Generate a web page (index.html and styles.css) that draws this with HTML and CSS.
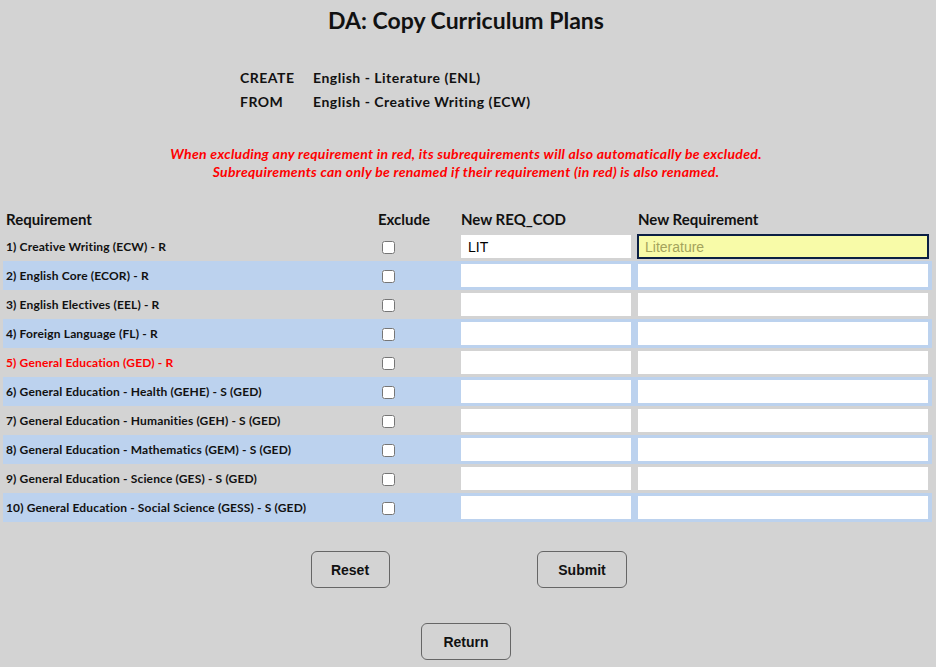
FILE: index.html
```html
<!DOCTYPE html>
<html lang="en">
<head>
<meta charset="utf-8">
<title>DA: Copy Curriculum Plans</title>
<link rel="stylesheet" href="styles.css">
</head>
<body>
<h1 class="title">DA: Copy Curriculum Plans</h1>
<div class="info">
  <span class="info-label">CREATE</span><span class="info-value">English - Literature (ENL)</span>
  <span class="info-label">FROM</span><span class="info-value">English - Creative Writing (ECW)</span>
</div>
<p class="notice">When excluding any requirement in red, its subrequirements will also automatically be excluded.<br>Subrequirements can only be renamed if their requirement (in red) is also renamed.</p>
<table class="reqs">
  <colgroup><col class="c1"><col class="c2"><col class="c3"><col class="c4"></colgroup>
  <thead>
    <tr><th>Requirement</th><th>Exclude</th><th>New REQ_COD</th><th>New Requirement</th></tr>
  </thead>
  <tbody>
    <tr><td class="name">1) Creative Writing (ECW) - R</td><td><input type="checkbox"></td><td><input class="code" type="text" value="LIT"></td><td><input class="req focused" type="text" placeholder="Literature"></td></tr>
    <tr class="alt"><td class="name">2) English Core (ECOR) - R</td><td><input type="checkbox"></td><td><input class="code" type="text"></td><td><input class="req" type="text"></td></tr>
    <tr><td class="name">3) English Electives (EEL) - R</td><td><input type="checkbox"></td><td><input class="code" type="text"></td><td><input class="req" type="text"></td></tr>
    <tr class="alt"><td class="name">4) Foreign Language (FL) - R</td><td><input type="checkbox"></td><td><input class="code" type="text"></td><td><input class="req" type="text"></td></tr>
    <tr><td class="name red">5) General Education (GED) - R</td><td><input type="checkbox"></td><td><input class="code" type="text"></td><td><input class="req" type="text"></td></tr>
    <tr class="alt"><td class="name">6) General Education - Health (GEHE) - S (GED)</td><td><input type="checkbox"></td><td><input class="code" type="text"></td><td><input class="req" type="text"></td></tr>
    <tr><td class="name">7) General Education - Humanities (GEH) - S (GED)</td><td><input type="checkbox"></td><td><input class="code" type="text"></td><td><input class="req" type="text"></td></tr>
    <tr class="alt"><td class="name">8) General Education - Mathematics (GEM) - S (GED)</td><td><input type="checkbox"></td><td><input class="code" type="text"></td><td><input class="req" type="text"></td></tr>
    <tr><td class="name">9) General Education - Science (GES) - S (GED)</td><td><input type="checkbox"></td><td><input class="code" type="text"></td><td><input class="req" type="text"></td></tr>
    <tr class="alt"><td class="name">10) General Education - Social Science (GESS) - S (GED)</td><td><input type="checkbox"></td><td><input class="code" type="text"></td><td><input class="req" type="text"></td></tr>
  </tbody>
</table>
<div class="actions">
  <div class="action-cell"><button class="btn btn-reset" type="button">Reset</button></div>
  <div class="action-cell"><button class="btn btn-submit" type="button">Submit</button></div>
</div>
<div class="return-row"><button class="btn btn-return" type="button">Return</button></div>
</body>
</html>
```
FILE: styles.css
```css
html, body {
  margin: 0;
  padding: 0;
  background: #d3d3d3;
}
body {
  margin-right: 4px;
  font-family: Lato, "Noto Sans", sans-serif;
  color: #111;
}
.title {
  margin: 7px 0 0;
  font-size: 23px;
  line-height: 26px;
  font-weight: 700;
  text-align: center;
  color: #111;
}
.info {
  display: grid;
  grid-template-columns: 73px auto;
  margin: 33px 0 0 240px;
  font-size: 14px;
  font-weight: 700;
  line-height: 24px;
  letter-spacing: 0.5px;
}
.notice {
  margin: 31px 0 0;
  text-align: center;
  color: #ff0000;
  font-size: 14px;
  line-height: 18px;
  font-weight: 700;
  font-style: italic;
  letter-spacing: 0.3px;
}
.reqs {
  margin: 25px 0 0 3px;
  width: 930px;
  table-layout: fixed;
  border-collapse: collapse;
}
.c1 { width: 372px; }
.c2 { width: 83px; }
.c3 { width: 177px; }
.c4 { width: 298px; }
.reqs th {
  text-align: left;
  font-size: 15px;
  font-weight: 700;
  height: 26px;
  padding: 0 3px;
  vertical-align: middle;
}
.reqs td {
  height: 29px;
  padding: 0 3px;
  vertical-align: middle;
}
.reqs tr.alt td {
  background: #bcd2ee;
}
.name {
  font-size: 12px;
  font-weight: 700;
  letter-spacing: 0.15px;
  white-space: nowrap;
}
.name.red {
  color: #ff0000;
}
.reqs input[type="checkbox"] {
  margin: 3px 3px 3px 4px;
  width: 13px;
  height: 13px;
  vertical-align: middle;
}
.reqs input[type="text"] {
  display: block;
  box-sizing: border-box;
  height: 23px;
  margin: 0;
  padding: 0 6px;
  border: 1px solid #fff;
  background: #fff;
  font-family: "Liberation Sans", Arial, sans-serif;
  font-size: 14px;
  color: #000;
  outline: none;
}
.reqs input.code { width: 170px; }
.reqs input.req { width: 290px; }
.reqs input.focused {
  background: #f8fba8;
  border: 2px solid #0b1f44;
  margin-left: -1px;
  width: 292px;
  height: 25px;
  margin-top: -1px;
  margin-bottom: -1px;
}
.reqs input.focused::placeholder {
  color: #a4a35c;
}
.actions {
  display: grid;
  grid-template-columns: 232px 232px;
  justify-content: center;
  margin-top: 29px;
}
.action-cell {
  display: flex;
  justify-content: center;
}
.btn {
  font-family: "Liberation Sans", Arial, sans-serif;
  font-size: 14px;
  font-weight: 700;
  color: #111;
  background: #d3d3d3;
  border: 1px solid #666;
  border-radius: 6px;
  height: 37px;
  padding: 0;
}
.btn-reset { width: 79px; }
.btn-submit { width: 90px; }
.btn-return { width: 90px; }
.return-row {
  display: flex;
  justify-content: center;
  margin-top: 35px;
}
```
